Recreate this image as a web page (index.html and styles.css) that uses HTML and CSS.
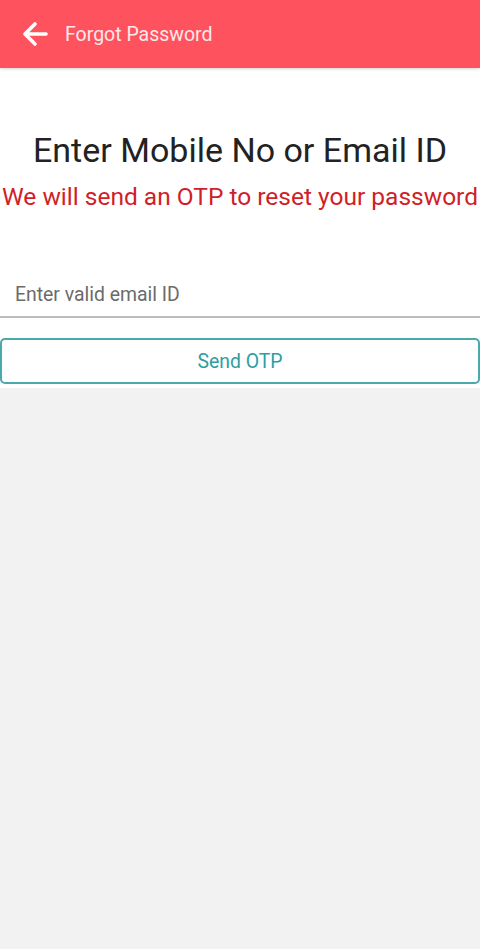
FILE: index.html
```html
<!DOCTYPE html>
<html>
<head>
<meta charset="utf-8">
<link rel="stylesheet" href="styles.css">
</head>
<body>
<header class="appbar">
  <svg class="back" viewBox="0 0 26 26" width="26" height="26">
    <path d="M24 13H3M13 3L3 13L13 23" fill="none" stroke="#fff" stroke-width="3.6" stroke-linecap="round" stroke-linejoin="round"/>
  </svg>
  <span class="title">Forgot Password</span>
</header>
<main class="content">
  <h1 class="heading">Enter Mobile No or Email ID</h1>
  <p class="sub">We will send an OTP to reset your password</p>
  <div class="field">
    <input class="input" type="text" placeholder="Enter valid email ID">
  </div>
  <button class="btn">Send OTP</button>
</main>
</body>
</html>
```
FILE: styles.css
```css
html, body {
  margin: 0;
  padding: 0;
}
body {
  background: #f2f2f2;
  font-family: Roboto, "Noto Sans", sans-serif;
  width: 480px;
  height: 949px;
}
.appbar {
  height: 68px;
  background: #ff525f;
  display: flex;
  align-items: center;
  padding-left: 22px;
  box-sizing: border-box;
  box-shadow: 0 1px 3px rgba(0,0,0,0.18);
  position: relative;
  z-index: 1;
}
.back {
  display: block;
}
.title {
  margin-left: 17px;
  color: #fde8ea;
  font-size: 19.5px;
}
.content {
  background: #fff;
  padding: 62px 0 4px;
  display: flex;
  flex-direction: column;
}
.heading {
  margin: 0;
  text-align: center;
  font-weight: 400;
  font-size: 34px;
  line-height: 40px;
  color: #222;
}
.sub {
  margin: 12px 0 0;
  text-align: center;
  font-size: 24.5px;
  line-height: 30px;
  color: #d01f28;
  white-space: nowrap;
}
.field {
  margin-top: 55px;
  border-bottom: 2px solid #bdbdbd;
}
.input {
  display: block;
  width: 100%;
  box-sizing: border-box;
  border: none;
  outline: none;
  background: transparent;
  height: 49px;
  padding: 6px 15px 0;
  font-family: Roboto, "Noto Sans", sans-serif;
  font-size: 19.4px;
  color: #333;
}
.input::placeholder {
  color: #6b6b6b;
}
.btn {
  margin-top: 20px;
  height: 46px;
  width: 480px;
  border: 2px solid #4aa9ad;
  border-radius: 5px;
  background: #fff;
  color: #2d9ea2;
  font-family: Roboto, "Noto Sans", sans-serif;
  font-size: 19.4px;
}
```
